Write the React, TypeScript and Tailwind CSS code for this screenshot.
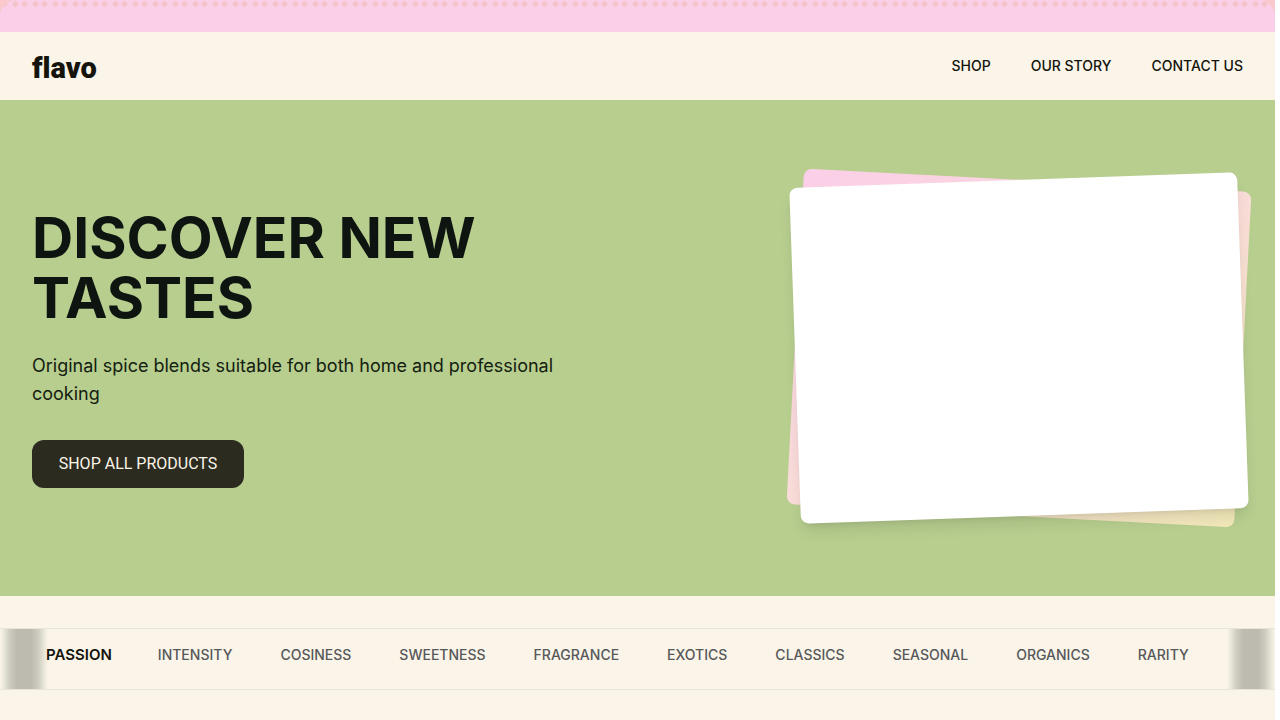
import { useState } from 'react'

const NAV = ['Shop', 'Our story', 'Contact us']

const CATEGORIES = [
  'Passion',
  'Intensity',
  'Cosiness',
  'Sweetness',
  'Fragrance',
  'Exotics',
  'Classics',
  'Seasonal',
  'Organics',
  'Rarity',
]

export default function App() {
  return (
    <div className="bg-white pr-[5px] font-['Inter',sans-serif] text-[#14140d]">
      <div className="min-h-screen overflow-hidden bg-[#fbf4e8]">
        <PromoBar />
        <Header />
        <main>
          <Hero />
          <CategoryTabs />
        </main>
      </div>
    </div>
  )
}

function PromoBar() {
  return (
    <div className="h-8 bg-[#fac9cc]">
      <div className="h-full overflow-hidden rounded-t-2xl bg-[#fbcfe8]">
        <svg className="block h-2 w-full" aria-hidden="true">
          <defs>
            <pattern id="dots" width="20" height="8" patternUnits="userSpaceOnUse">
              <path d="M4.5 0.5 8 4 4.5 7.5 1 4Z" fill="#f4c4cb" />
              <path d="M15.5 0.5 19 4 15.5 7.5 12 4Z" fill="#f4c4cb" />
            </pattern>
          </defs>
          <rect width="100%" height="8" fill="url(#dots)" />
        </svg>
      </div>
    </div>
  )
}

function Header() {
  return (
    <header className="flex h-[68px] items-center justify-between px-8">
      <a
        href="#"
        className="pt-1 font-['Roboto',sans-serif] text-[29px] leading-9 font-black [font-variant-ligatures:none]"
      >
        flavo
      </a>
      <nav className="flex gap-10 text-sm font-medium uppercase">
        {NAV.map((item) => (
          <a key={item} href="#">
            {item}
          </a>
        ))}
      </nav>
    </header>
  )
}

function Hero() {
  return (
    <section className="flex h-[496px] items-center justify-between bg-[#b7ce8f] px-8">
      <div className="w-[560px]">
        <h1 className="text-[57px] leading-[60px] font-bold text-[#0e140f] uppercase">
          Discover new tastes
        </h1>
        <p className="mt-6 text-lg leading-7 text-[#14200f]">
          Original spice blends suitable for both home and professional cooking
        </p>
        <button
          type="button"
          className="mt-8 h-12 min-w-[212px] rounded-xl bg-[#2b2b1f] px-6 font-['Roboto',sans-serif] text-base text-[#fbf4e8] uppercase"
        >
          Shop all products
        </button>
      </div>

      {/* two stacked cards, tilted in opposite directions */}
      <div className="relative h-[336px] w-[448px]">
        <div className="absolute inset-0 rotate-3 rounded-lg bg-linear-to-br from-[#fbcfe8] via-[#f9dcd8] to-[#f1e8b8]" />
        <div className="absolute inset-0 -rotate-2 rounded-lg bg-white shadow-lg" />
      </div>
    </section>
  )
}

function CategoryTabs() {
  const [active, setActive] = useState('Passion')

  return (
    <div className="mt-8 flex h-[62px] justify-between border-y border-[#e9e5da]">
      <Fade />
      <div className="flex flex-1 items-start gap-12 pt-4 leading-5">
        {CATEGORIES.map((name) => (
          <button
            key={name}
            type="button"
            onClick={() => setActive(name)}
            className={
              name === active
                ? '-mx-0.5 text-[15px] leading-5 font-semibold uppercase'
                : 'text-sm leading-5 font-medium text-[#56585a] uppercase'
            }
          >
            {name}
          </button>
        ))}
      </div>
      <Fade />
    </div>
  )
}

function Fade() {
  return (
    <div className="w-12 bg-[linear-gradient(to_right,#fbf4e8,#e9e6da_8%,#cfcdc1_20%,#bdbbb0_35%,#bdbbb0_65%,#cfcdc1_80%,#e9e6da_92%,#fbf4e8)]" />
  )
}
